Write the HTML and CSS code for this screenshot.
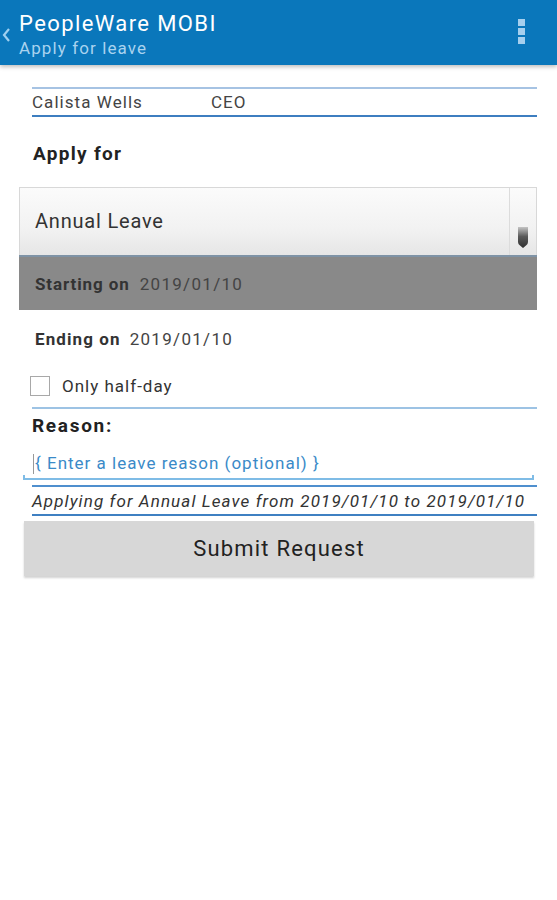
FILE: index.html
```html
<!DOCTYPE html>
<html>
<head>
<meta charset="utf-8">
<link rel="stylesheet" href="styles.css">
</head>
<body>
<header class="appbar">
  <div class="back">
    <svg width="9" height="14" viewBox="0 0 9 14"><path d="M7 1 L2 7 L7 13" fill="none" stroke="#9fd0f0" stroke-width="2.2"/></svg>
  </div>
  <div class="titles">
    <div class="title">PeopleWare MOBI</div>
    <div class="subtitle">Apply for leave</div>
  </div>
  <div class="overflow">
    <span class="dot"></span><span class="dot"></span><span class="dot"></span>
  </div>
</header>
<main class="content">
  <div class="employee">
    <span class="emp-name">Calista Wells</span>
    <span class="emp-role">CEO</span>
  </div>
  <div class="label apply-label">Apply for</div>
  <div class="spinner">
    <span class="spinner-text">Annual Leave</span>
    <span class="spinner-arrow">
      <svg width="12" height="23" viewBox="0 0 12 23"><defs><linearGradient id="g" x1="0" y1="0" x2="0" y2="1"><stop offset="0" stop-color="#c4c4c4"/><stop offset="0.45" stop-color="#5a5a5a"/><stop offset="1" stop-color="#303030"/></linearGradient></defs><path d="M1 1 H11 V16 Q11 18 9 19.5 L6 22 L3 19.5 Q1 18 1 16 Z" fill="url(#g)"/></svg>
    </span>
  </div>
  <div class="date-row starting">
    <span class="date-label">Starting on</span>
    <span class="date-value">2019/01/10</span>
  </div>
  <div class="date-row ending">
    <span class="date-label">Ending on</span>
    <span class="date-value">2019/01/10</span>
  </div>
  <div class="check-row">
    <span class="checkbox"></span>
    <span class="check-label">Only half-day</span>
  </div>
  <div class="label reason-label">Reason:</div>
  <div class="edit">
    <span class="cursor"></span><span class="hint">{ Enter a leave reason (optional) }</span>
  </div>
  <div class="summary">Applying for Annual Leave from 2019/01/10 to 2019/01/10</div>
  <div class="submit-wrap">
    <button class="submit">Submit Request</button>
  </div>
</main>
</body>
</html>
```
FILE: styles.css
```css
* { box-sizing: border-box; }
html, body { margin: 0; padding: 0; background: #fff; }
body { font-family: Roboto, "Noto Sans", sans-serif; width: 557px; height: 900px; overflow: hidden; letter-spacing: 0.9px; }

.appbar {
  height: 65px;
  background: #0a77bb;
  display: flex;
  align-items: flex-start;
  box-shadow: 0 2px 4px rgba(0,0,0,0.25);
  position: relative;
  z-index: 1;
}
.back { width: 19px; padding: 27px 0 0 2px; }
.titles { flex: 1; padding-top: 10px; }
.title { color: #fff; font-size: 22px; line-height: 28px; letter-spacing: 1.4px; }
.subtitle { color: #a9d3ef; font-size: 17px; line-height: 22px; margin-top: -1px; letter-spacing: 1.1px; }
.overflow { width: 38px; display: flex; flex-direction: column; align-items: center; gap: 2px; padding-top: 19px; margin-right: 17px; }
.dot { width: 7px; height: 7px; background: #a5cfee; display: block; }

.employee {
  margin: 22px 20px 0 32px;
  border-top: 2px solid #a6c3e3;
  border-bottom: 2px solid #3d7ec0;
  height: 30px;
  display: flex;
  align-items: center;
  font-size: 17px;
  color: #444;
  letter-spacing: 1.05px;
}
.emp-name { width: 179px; }
.label { font-size: 19px; font-weight: 700; color: #222; letter-spacing: 1.3px; }
.apply-label { margin: 26px 0 0 33px; line-height: 22px; }

.spinner {
  margin: 22px 20px 0 19px;
  height: 68px;
  border: 1px solid #d8d8d8;
  border-bottom: none;
  background: linear-gradient(#fbfbfb, #f2f2f2 60%, #e6e6e6);
  display: flex;
  align-items: stretch;
}
.spinner-text { flex: 1; font-size: 20px; color: #333; padding: 21px 0 0 15px; letter-spacing: 0.8px; }
.spinner-arrow { width: 27px; border-left: 1px solid #dcdcdc; display: flex; justify-content: center; align-items: flex-end; padding-bottom: 6px; }

.date-row { display: flex; align-items: center; padding-left: 35px; }
.date-label { font-size: 17px; font-weight: 700; color: #333; margin-right: 9px; letter-spacing: 0.9px; }
.date-value { font-size: 17px; color: #444; letter-spacing: 1.3px; }
.starting { margin: 0 20px 0 19px; padding-left: 16px; height: 55px; background: #898989; border-top: 2px solid #7f93a6; }
.starting .date-label { margin-right: 10px; }
.ending { height: 58px; }
.ending .date-label { letter-spacing: 1.1px; }

.check-row { display: flex; align-items: center; padding-left: 30px; height: 40px; margin-top: -2px; }
.checkbox { width: 20px; height: 20px; border: 1px solid #a8a8a8; background: #fff; margin-right: 12px; }
.check-label { font-size: 17px; color: #333; letter-spacing: 1px; }

.reason-label { margin: 1px 20px 0 32px; border-top: 2px solid #9dc3e4; padding-top: 6px; line-height: 22px; letter-spacing: 1.7px; }

.edit {
  margin: 17px 23px 0 23px;
  height: 26px;
  border-bottom: 2px solid #7fbce6;
  display: flex;
  align-items: center;
  position: relative;
  padding-left: 10px;
}
.edit::before, .edit::after { content: ""; position: absolute; bottom: -2px; width: 2px; height: 5px; background: #7fbce6; }
.edit::before { left: 0; }
.edit::after { right: 0; }
.cursor { width: 1px; height: 20px; background: #999; margin-right: 1px; margin-top: -4px; }
.hint { font-size: 17px; color: #3a8ac8; letter-spacing: 1px; margin-top: -6px; }

.summary {
  margin: 5px 20px 0 32px;
  border-top: 2px solid #4f8fce;
  border-bottom: 2px solid #3f80c2;
  height: 31px;
  font-size: 17px;
  font-style: italic;
  color: #333;
  display: flex;
  align-items: center;
  letter-spacing: 1.1px;
  white-space: nowrap;
}

.submit-wrap { padding: 5px 23px 0 24px; }
.submit {
  width: 100%;
  height: 55px;
  border: none;
  background: #d7d7d7;
  box-shadow: 0 2px 2px rgba(0,0,0,0.18);
  font-family: Roboto, "Noto Sans", sans-serif;
  font-size: 22px;
  letter-spacing: 1.2px;
  color: #222;
  padding: 0;
}
```
